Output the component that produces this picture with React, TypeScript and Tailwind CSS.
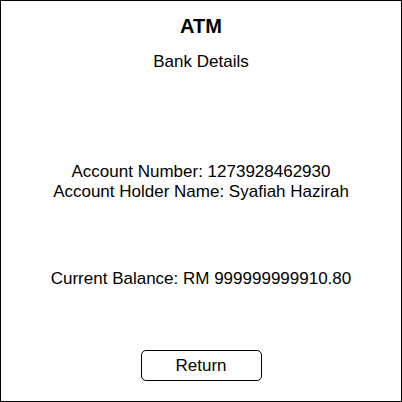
export default function App() {
  return (
    <div className="w-[402px] h-[402px] border border-black bg-white flex flex-col items-center text-black" style={{ fontFamily: '"Liberation Sans", Arial, sans-serif' }}>
      <div className="mt-[13px] text-[20px] font-bold leading-[24px]">ATM</div>
      <div className="mt-[14px] text-[17px] leading-[20px]">Bank Details</div>
      <div className="mt-[90px] text-[17px] leading-[20px] text-center">
        <div>Account Number: 1273928462930</div>
        <div>Account Holder Name: Syafiah Hazirah</div>
      </div>
      <div className="mt-[67px] text-[17px] leading-[20px]">Current Balance: RM 999999999910.80</div>
      <button className="mt-[61px] w-[121px] h-[31px] border border-black rounded-[5px] text-[17px] leading-[20px] bg-white">Return</button>
    </div>
  );
}
